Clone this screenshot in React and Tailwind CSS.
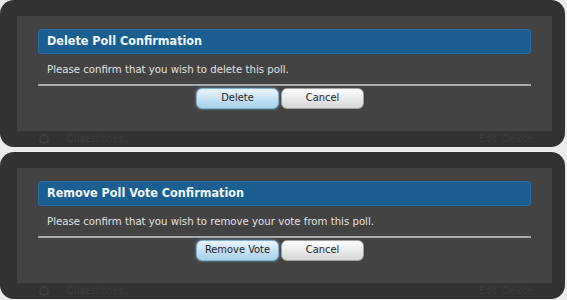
const font = "font-['DejaVu_Sans_Condensed','DejaVu_Sans',sans-serif]";

const ConfirmPanel = ({ title, message, action, height }) => {
  return (
    <div className={`${height} w-[565px] rounded-[14px] bg-[#303234] pt-4 pl-[17px] pr-[13px] flex flex-col overflow-hidden ${font}`}>
      <div className="h-[115px] bg-[#434343] px-[21px] pt-[13px] flex flex-col">
        <div className="h-[25px] rounded-[3px] bg-[#1b5e92] border border-[#2a6ea3] pl-[8px] flex items-center text-[12.5px] font-bold text-[#f2f6fa]">
          {title}
        </div>
        <p className="mt-[9px] pl-[9px] text-[11.3px] leading-[14px] text-[#e2e2e2]">{message}</p>
        <div className="mt-[7px] h-[2px] bg-[#a8aaac]" />
        <div className="mt-[2px] flex justify-center gap-[2px] pr-[9px]">
          <button className="w-[83px] h-[21px] rounded-[6px] border border-[#7fb0d2] bg-gradient-to-b from-[#eaf5fc] to-[#a6d0ed] shadow-[0_0_3px_rgba(150,200,240,0.6)] text-[11px] text-[#1e1e1e]">
            {action}
          </button>
          <button className="w-[83px] h-[21px] rounded-[6px] border border-[#a0a0a0] bg-gradient-to-b from-[#ffffff] to-[#d6d6d6] text-[11px] text-[#1e1e1e]">
            Cancel
          </button>
        </div>
      </div>
      <div className="flex items-center justify-between h-[16px] pl-[22px] pr-[20px] text-[10px] text-[#3c3e40] leading-none">
        <div className="flex items-center gap-[18px]">
          <span className="w-[10px] h-[10px] rounded-full border-2 border-[#3c3e40]" />
          <span>Quaestiones</span>
        </div>
        <span>Edit&nbsp;&nbsp;Delete</span>
      </div>
    </div>
  );
};

export default function App() {
  return (
    <div className="w-[567px] h-[300px] bg-[#ececec] flex flex-col gap-[5px] overflow-hidden">
      <ConfirmPanel
        height="h-[147px]"
        title="Delete Poll Confirmation"
        message="Please confirm that you wish to delete this poll."
        action="Delete"
      />
      <ConfirmPanel
        height="h-[147px]"
        title="Remove Poll Vote Confirmation"
        message="Please confirm that you wish to remove your vote from this poll."
        action="Remove Vote"
      />
    </div>
  );
}
